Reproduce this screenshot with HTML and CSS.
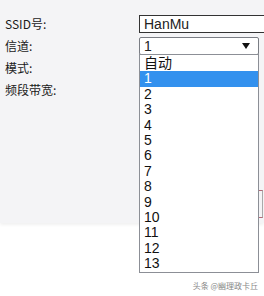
FILE: index.html
```
<!DOCTYPE HTML>
<html>

<head>
  <meta charset="utf-8">
  <link rel="stylesheet" href="styles.css">
</head>

<body>

  <div class="panel">
    <div class="row">
      <span class="label">SSID号:</span>
      <div class="input">HanMu</div>
    </div>
    <div class="row">
      <span class="label">信道:</span>
      <div class="select">
        <span>1</span>
        <svg class="arrow" width="8" height="6" viewBox="0 0 8 6"><path d="M0 0H8L4 6Z" fill="#111"/></svg>
      </div>
      <ul class="options">
        <li>自动</li>
        <li class="selected">1</li>
        <li>2</li>
        <li>3</li>
        <li>4</li>
        <li>5</li>
        <li>6</li>
        <li>7</li>
        <li>8</li>
        <li>9</li>
        <li>10</li>
        <li>11</li>
        <li>12</li>
        <li>13</li>
      </ul>
    </div>
    <div class="row">
      <span class="label">模式:</span>
    </div>
    <div class="row">
      <span class="label">频段带宽:</span>
    </div>
    <div class="edge"></div>
  </div>

  <div class="mark">头条 @幽理政卡丘</div>

</body>

</html>
```

FILE: styles.css
```
body {
  margin: 0;
  background: #fff;
  overflow: hidden;
}

.panel {
  height: 223px;
  padding-top: 15px;
  box-sizing: border-box;
  background: #f4f4f6;
  box-shadow: 0 2px 3px rgba(0, 0, 0, .06);
}

.row {
  position: relative;
  display: flex;
  align-items: center;
  height: 18px;
  margin-bottom: 4px;
}

.label {
  width: 134px;
  padding-left: 5px;
  font: 12px/18px "Noto Sans CJK SC", sans-serif;
  color: #1a1a1a;
}

.input {
  flex: 1;
  height: 18px;
  margin-right: -4px;
  padding-left: 4px;
  box-sizing: border-box;
  border: 1px solid #333;
  background: #fff;
  font: 14px/16px "Liberation Sans", sans-serif;
  color: #222;
}

.select {
  display: flex;
  align-items: center;
  justify-content: space-between;
  width: 120px;
  height: 18px;
  padding: 0 8px 0 4px;
  box-sizing: border-box;
  border: 1px solid #7a7d84;
  border-radius: 2px;
  background: #fff;
  font: 14px/16px "Liberation Sans", sans-serif;
  color: #222;
}

.options {
  position: absolute;
  top: 17px;
  left: 139px;
  width: 120px;
  margin: 0;
  padding: 1px 0 1px;
  box-sizing: border-box;
  list-style: none;
  border: 1px solid #8c8f96;
  background: #fff;
  z-index: 2;
}

.options li {
  height: 15.4px;
  padding-left: 4px;
  font: 14px/15.4px "Liberation Sans", "Noto Sans CJK SC", sans-serif;
  color: #111;
}

.options .selected {
  background: #3391ee;
  color: #fff;
}

.edge {
  width: 6px;
  height: 26px;
  margin: 91px 0 0 256px;
  border-top: 1px solid #b36a78;
  border-bottom: 1px solid #b36a78;
  border-right: 1px solid #aaa;
}

.mark {
  margin-top: 57px;
  padding-right: 6px;
  text-align: right;
  font: 8px "Noto Sans CJK SC", sans-serif;
  color: #888;
}
```
